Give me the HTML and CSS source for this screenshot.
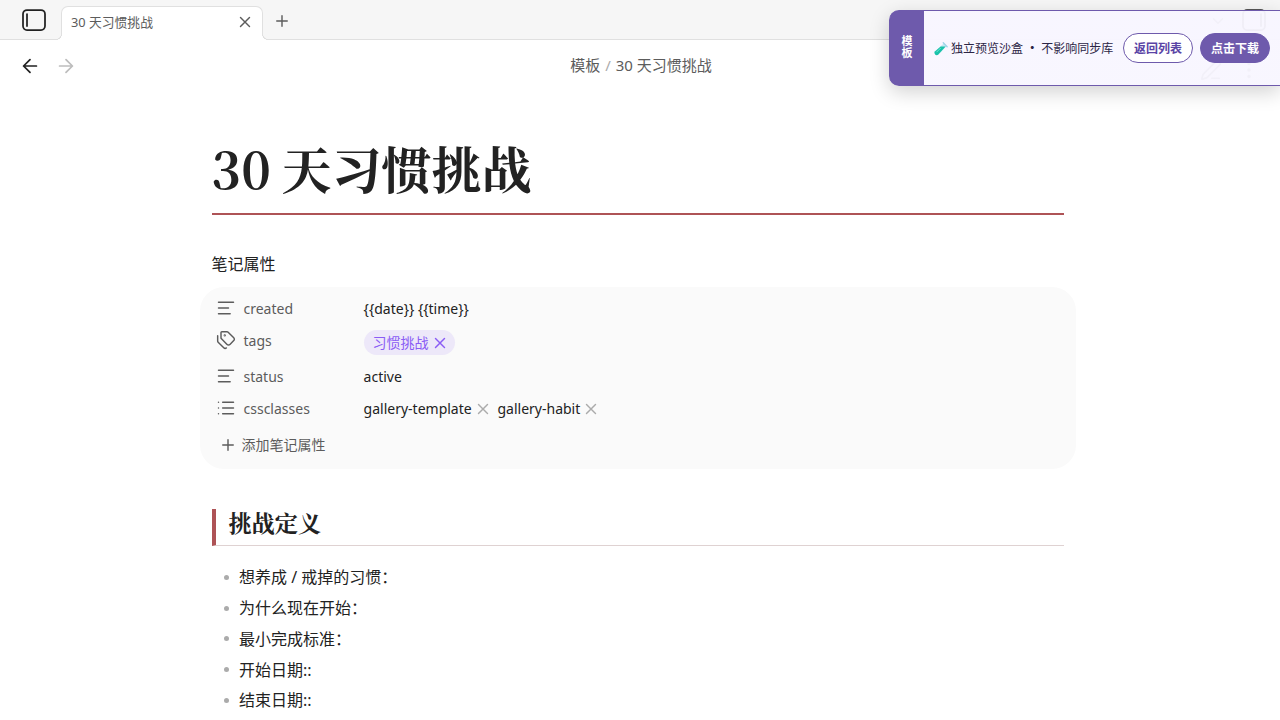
FILE: index.html
```html
<!DOCTYPE html>
<html lang="zh-CN">
<head>
<meta charset="utf-8">
<title>30 天习惯挑战</title>
<link rel="stylesheet" href="styles.css">
</head>
<body>
<svg class="defs" width="0" height="0">
  <symbol id="x" viewBox="0 0 24 24"><path d="M18 6 6 18M6 6l12 12"/></symbol>
  <symbol id="plus" viewBox="0 0 24 24"><path d="M5 12h14M12 5v14"/></symbol>
  <symbol id="text" viewBox="0 0 24 24"><path d="M21 5H3M15 12H3M17 19H3"/></symbol>
  <symbol id="list" viewBox="0 0 24 24"><path d="M3 5h.01M3 12h.01M3 19h.01M8 5h13M8 12h13M8 19h13"/></symbol>
  <symbol id="tags" viewBox="0 0 24 24"><path d="M13.172 2a2 2 0 0 1 1.414.586l6.71 6.71a2.4 2.4 0 0 1 0 3.408l-4.592 4.592a2.4 2.4 0 0 1-3.408 0l-6.71-6.71A2 2 0 0 1 6 9.172V3a1 1 0 0 1 1-1zM2 7v6.172a2 2 0 0 0 .586 1.414l6.71 6.71a2.4 2.4 0 0 0 3.191.193"/><circle cx="10.5" cy="6.5" r=".5"/></symbol>
  <symbol id="back" viewBox="0 0 24 24"><path d="m12 19-7-7 7-7M19 12H5"/></symbol>
  <symbol id="forward" viewBox="0 0 24 24"><path d="M5 12h14M12 5l7 7-7 7"/></symbol>
</svg>
<div class="tabbar">
  <svg class="panel-icon" viewBox="0 0 24 22"><rect x="1" y="1" width="22" height="20" rx="4"/><path d="M5 5v12"/></svg>
  <div class="tab"><span>30 天习惯挑战</span><svg class="icon tab-close"><use href="#x"/></svg></div>
  <svg class="icon new-tab"><use href="#plus"/></svg>
  <svg class="icon chevron" viewBox="0 0 24 24"><path d="m6 9 6 6 6-6"/></svg>
  <svg class="panel-icon" viewBox="0 0 24 22"><rect x="1" y="1" width="22" height="20" rx="4"/><path d="M19 5v12"/></svg>
</div>
<div class="view-header">
  <div class="nav"><svg class="icon"><use href="#back"/></svg><svg class="icon off"><use href="#forward"/></svg></div>
  <div class="crumbs"><span>模板</span><i>/</i><span>30 天习惯挑战</span></div>
  <div class="actions"><svg class="icon" viewBox="0 0 24 24"><path d="M13 21h8M21.174 6.812a1 1 0 0 0-3.986-3.987L3.842 16.174a2 2 0 0 0-.5.83l-1.321 4.352a.5.5 0 0 0 .623.622l4.353-1.32a2 2 0 0 0 .83-.497z"/></svg><svg class="icon" viewBox="0 0 24 24"><circle cx="12" cy="12" r="1"/><circle cx="12" cy="5" r="1"/><circle cx="12" cy="19" r="1"/></svg></div>
</div>
<main class="note">
  <h1>30 天习惯挑战</h1>
  <div class="props-title">笔记属性</div>
  <section class="props">
    <div class="row"><svg class="icon"><use href="#text"/></svg><span class="key">created</span><span>{{date}} {{time}}</span></div>
    <div class="row tall"><svg class="icon"><use href="#tags"/></svg><span class="key">tags</span><span class="pill">习惯挑战<svg class="icon"><use href="#x"/></svg></span></div>
    <div class="row"><svg class="icon"><use href="#text"/></svg><span class="key">status</span><span>active</span></div>
    <div class="row"><svg class="icon"><use href="#list"/></svg><span class="key">cssclasses</span><span class="item">gallery-template<svg class="icon"><use href="#x"/></svg></span><span class="item">gallery-habit<svg class="icon"><use href="#x"/></svg></span></div>
    <div class="add"><svg class="icon"><use href="#plus"/></svg>添加笔记属性</div>
  </section>
  <h2>挑战定义</h2>
  <ul>
    <li>想养成 / 戒掉的习惯：</li>
    <li>为什么现在开始：</li>
    <li>最小完成标准：</li>
    <li>开始日期::</li>
    <li>结束日期::</li>
  </ul>
</main>
<aside class="banner">
  <div class="banner-tag">模板</div>
  <div class="banner-body"><span class="banner-text"><svg class="tube" viewBox="0 0 14 14"><path d="M10.2 1.2 12.8 3.8 5 11.7a2.1 2.1 0 0 1-3-3z" fill="#c5e8f2"/><path d="M7.2 4.3h4.6L5 11.7a2.1 2.1 0 0 1-3-3z" fill="#18c2aa"/><path d="m9.6.8 3.6 3.6" stroke="#9ed4e8" stroke-width="1.3" stroke-linecap="round"/><path d="m3.3 9.5 4-4" stroke="#7be8d2" stroke-width=".8"/></svg><span>独立预览沙盒 <span class="dot">·</span> 不影响同步库</span></span><a class="btn">返回列表</a><a class="btn solid">点击下载</a></div>
</aside>
</body>
</html>
```
FILE: styles.css
```css
* { box-sizing: border-box; }
body { margin: 0; width: 1280px; height: 720px; overflow: hidden; background: #fff; color: #222; font: 16px/24px "Noto Sans", "Noto Sans CJK SC", sans-serif; }
.defs { display: block; height: 0; }
svg { flex: none; }
.icon { width: 18px; height: 18px; fill: none; stroke: currentColor; stroke-width: 1.9; stroke-linecap: round; stroke-linejoin: round; }
.tabbar { display: flex; height: 40px; padding: 0 14px 0 22px; background: #f6f6f6; border-bottom: 1px solid #e0e0e0; }
.panel-icon { width: 24px; height: 22px; margin-top: 9px; fill: none; stroke: #222; stroke-width: 1.75; stroke-linecap: round; }
.tab { position: relative; display: flex; align-items: center; justify-content: space-between; width: 202px; height: 34px; margin: 6px 0 -1px 15px; padding: 0 8px 2px 9px; background: #fff; border: 1px solid #e0e0e0; border-bottom: 0; border-radius: 7px 7px 0 0; font-size: 12.8px; color: #5c5c5c; }
.tab span { margin-top: -1px; }
.tab-close { margin-top: -1px; }
.tab::before, .tab::after { content: ""; position: absolute; bottom: 0; width: 6px; height: 6px; }
.tab::before { left: -6px; background: radial-gradient(circle at 0 0, #f6f6f6 4.7px, #e0e0e0 5.1px, #e0e0e0 5.7px, #fff 6.1px); }
.tab::after { right: -6px; background: radial-gradient(circle at 100% 0, #f6f6f6 4.7px, #e0e0e0 5.1px, #e0e0e0 5.7px, #fff 6.1px); }
.new-tab { margin: 12px 0 0 10px; color: #5c5c5c; }
.chevron { margin: 12px 15px 0 auto; color: #5c5c5c; }
.view-header { display: grid; grid-template-columns: 1fr auto 1fr; align-items: center; height: 52px; padding: 0 20px; }
.nav { display: flex; gap: 16px; }
.nav .icon { width: 22px; height: 22px; margin: 0 -1px; }
.nav .off { color: #bdbdbd; }
.crumbs { margin-top: -2px; padding-left: 2px; font-size: 15px; color: #5c5c5c; }
.crumbs i { margin: 0 5px; color: #ababab; font-style: normal; }
.actions { display: flex; justify-content: flex-end; gap: 16px; margin-top: 7px; color: #5c5c5c; }
.actions .icon { width: 22px; height: 22px; }
.note { width: 852px; margin-left: 212px; }
h1 { height: 79px; margin: 44px 0 0; border-bottom: 2px solid #ae5356; font: 700 50px/62px "Noto Serif CJK SC", "Source Han Serif SC", serif; text-indent: -.4px; word-spacing: -1.8px; }
.props-title { margin: 37px 0 0 -.5px; }
.props { width: 876px; height: 182px; margin: 11px 0 0 -12px; padding: 6px 16px; border-radius: 24px; background: #fafafa; font-size: 14px; }
.row { display: flex; align-items: flex-start; height: 32px; padding-top: 4px; }
.row.tall { height: 36px; }
.row > .icon { width: 20px; height: 20px; margin-top: 1px; color: #5c5c5c; stroke-width: 1.75; }
.key { width: 120.6px; margin-left: 7px; padding-left: .5px; color: #5c5c5c; }
.pill { display: flex; align-items: center; height: 25px; margin-top: 1px; padding: 0 7px 0 9px; gap: 2.5px; border-radius: 13px; background: #ede8f9; color: #8a5cf5; }
.pill .icon { width: 18px; height: 18px; margin-right: -1px; }
.item { display: flex; align-items: center; gap: 2px; margin-right: 5.8px; }
.item .icon { width: 18px; height: 18px; color: #ababab; }
.add { display: flex; align-items: center; gap: 5px; height: 32px; margin-top: 4px; padding-left: 2.5px; color: #5c5c5c; }
h2 { height: 37px; margin: 40px 0 0; padding-left: 12.4px; border-left: 4px solid #ae5356; border-bottom: 1px solid #dfd2d2; font: 700 23.2px/27px "Noto Serif CJK SC", "Source Han Serif SC", serif; }
ul { margin: 16px 0 0; padding: 0; list-style: none; }
li { display: flex; align-items: center; height: 30.75px; padding-left: 12px; }
li::before { content: ""; width: 5px; height: 5px; margin-right: 10px; border-radius: 50%; background: #ababab; }
.banner { position: absolute; top: 10px; left: 889px; display: flex; width: 391px; height: 76px; border: 1px solid #6e5aac; border-right: 0; border-radius: 10px 0 0 10px; background: linear-gradient(90deg, #6e5aac 34px, rgba(248,246,255,.96) 34px); box-shadow: 0 6px 20px rgba(0,0,0,.18); font-size: 12px; overflow: hidden; }
.banner-tag { display: flex; align-items: center; justify-content: center; width: 34px; padding: 0 2px 3px 0; color: #fff; font-weight: 700; font-size: 11px; line-height: 14px; letter-spacing: 1px; writing-mode: vertical-rl; }
.banner-body { display: flex; align-items: center; padding-left: 10px; color: #2c2545; }
.banner-text { display: flex; align-items: center; width: 189px; padding-top: 2px; white-space: pre; }
.dot { display: inline-block; width: 12px; text-align: center; font-family: "Noto Sans CJK SC", sans-serif; font-weight: 700; line-height: 12px; }
.tube { width: 15px; height: 15px; margin: 0 3px 0 -1px; fill: none; }
.btn { display: flex; align-items: center; justify-content: center; width: 70px; height: 30px; padding-top: 1px; border: 1px solid #6e5aac; border-radius: 15px; background: #fff; color: #5a43a5; font-weight: 700; }
.solid { margin-left: 7px; background: #6e5aac; color: #fff; }
```
